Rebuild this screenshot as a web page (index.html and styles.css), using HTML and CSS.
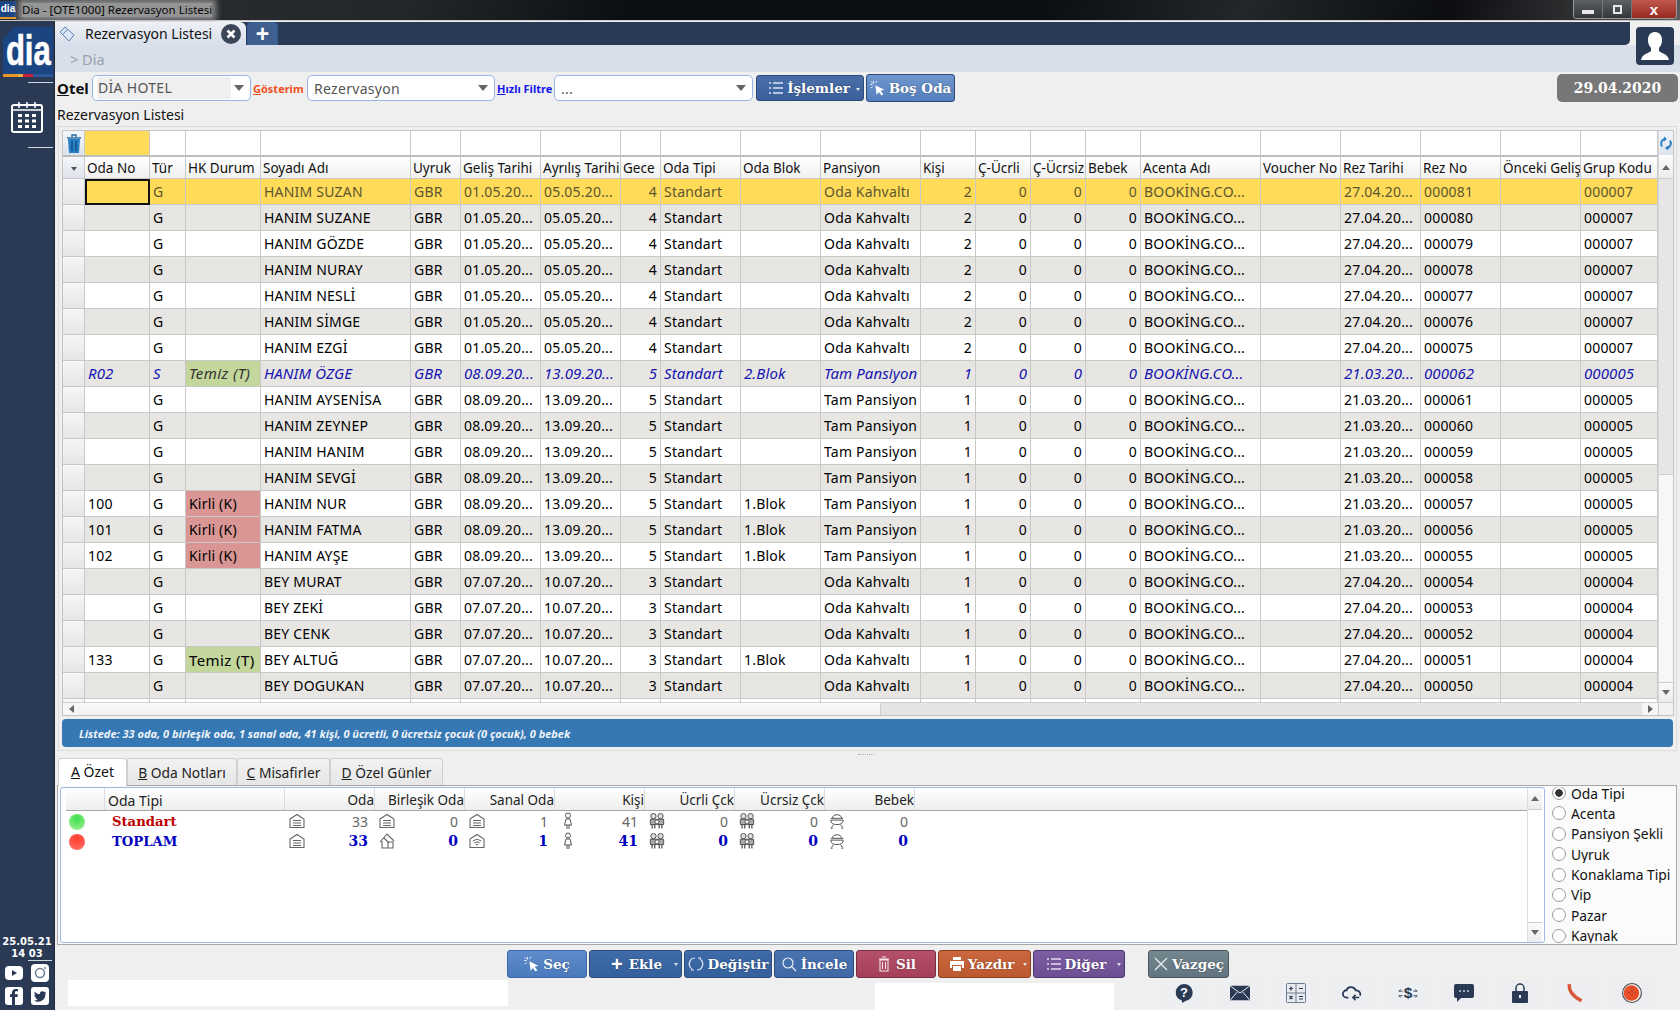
FILE: index.html
```html
<!DOCTYPE html>
<html lang="tr">
<head>
<meta charset="utf-8">
<title>Dia - Rezervasyon Listesi</title>
<link rel="stylesheet" href="styles.css">
</head>
<body>
<svg class="defs" aria-hidden="true">
  <symbol id="i-house" viewBox="0 0 16 16"><path d="M1 6 8 1.500 15 6v8.500H1Z M4 7.500h8 M4 10h8 M4 12.500h8" fill="none" stroke="#666" stroke-width="1.100"/></symbol>
  <symbol id="i-house2" viewBox="0 0 16 16"><path d="M1 9 8 1l7 7M3 8v7h6V9h5v6H9M5 5l5 5" fill="none" stroke="#666" stroke-width="1.100"/></symbol>
  <symbol id="i-wifi" viewBox="0 0 16 16"><path d="M1 6 8 1.500 15 6v8.500H1Z M4 8q4-3 8 0 M5.500 10q2.500-2 5 0 M7 12q1-1 2 0" fill="none" stroke="#666" stroke-width="1.100"/></symbol>
  <symbol id="i-person" viewBox="0 0 12 18"><circle cx="6" cy="3.500" r="2.500" fill="none" stroke="#555"/><path d="M4 7h4l1.500 6h-7ZM5 13v4M7 13v4" fill="none" stroke="#555"/></symbol>
  <symbol id="i-family" viewBox="0 0 18 18"><circle cx="5" cy="3.500" r="3" fill="#ddd" stroke="#444"/><circle cx="13" cy="3.500" r="3" fill="#ddd" stroke="#444"/><path d="M1.500 7h7v6h-7ZM9.500 7h7v6h-7Z" fill="#aaa" stroke="#444"/><path d="M3.500 13v4.500M6.500 13v4.500M11.500 13v4.500M14.500 13v4.500" fill="none" stroke="#444" stroke-width="1.300"/><circle cx="9" cy="10" r="2.300" fill="#fff" stroke="#444"/></symbol>
  <symbol id="i-stroller" viewBox="0 0 16 18"><path d="M1 8h14q0 5-7 5T1 8ZM3 6q0-4 5-4t5 4M1 6h14M4 13l-2 3M12 13l2 3" fill="none" stroke="#555" stroke-width="1.100"/><path d="M1 17h2M13 17h2" stroke="#555" stroke-width="1.400"/></symbol>
  <symbol id="i-click" viewBox="0 0 18 18"><path d="M6 6 16 11l-4 1 3 4-2 1.500-3-4-2.500 3Z" fill="#fff"/><path d="M4 1v3M0 5h3M1 1.500l2 2M8 1 6.500 3M1 9l2-1.500" stroke="#fff" fill="none"/></symbol>
</svg>

<div class="titlebar">
  <span class="title-logo">dia</span>
  <span class="title-text">Dia - [OTE1000] Rezervasyon Listesi</span>
  <div class="winbtns">
    <span class="winbtn"><i class="w-min"></i></span>
    <span class="winbtn"><i class="w-max"></i></span>
    <span class="winbtn close">x</span>
  </div>
</div>

<div class="workspace">
  <aside class="sidebar">
    <div class="logo"><span class="logo-text">dia</span></div>
    <div class="side-sep"></div>
    <svg class="calendar" viewBox="0 0 32 32"><rect x="1" y="4" width="30" height="27" rx="2" fill="none" stroke="#fff" stroke-width="2"/><path d="M8 1v6M16 1v6M24 1v6M1 9h30" stroke="#fff" stroke-width="1.600"/><path d="M7 13h4v3H7zM14 13h4v3h-4zM21 13h4v3h-4zM7 18.500h4v3H7zM14 18.500h4v3h-4zM21 18.500h4v3h-4zM7 24h4v3H7zM14 24h4v3h-4zM21 24h4v3h-4z" fill="#fff"/></svg>
    <div class="side-sep second"></div>
    <div class="side-clock">25.05.21<br>14 03</div>
    <div class="side-sep third"></div>
    <div class="social">
      <svg viewBox="0 0 18 18"><rect y="2" width="18" height="14" rx="4" fill="#fff"/><path d="M7 6v6l5-3Z" fill="#2a3a54"/></svg>
      <svg viewBox="0 0 18 18"><rect width="18" height="18" rx="4" fill="#fff"/><circle cx="9" cy="9" r="4.500" fill="none" stroke="#6f8296" stroke-width="1.600"/><circle cx="14" cy="4" r="1" fill="#6f8296"/></svg>
      <svg viewBox="0 0 18 18"><rect width="18" height="18" rx="3" fill="#fff"/><path d="M10 18V10h2.500l.4-2.800H10V5.600c0-.8.3-1.300 1.400-1.300H13V2h-2.300C8.500 2 7 3.300 7 5.400v1.800H5V10h2v8Z" fill="#2a3a54"/></svg>
      <svg viewBox="0 0 18 18"><rect width="18" height="18" rx="3" fill="#fff"/><path d="M15 5.200l-1.400.5 1-1.300-1.500.6a2.600 2.600 0 0 0-4.400 2.300C6.700 7.200 5 6.300 3.800 4.800c-.7 1.200-.3 2.700.8 3.400l-1.200-.3c0 1.300.9 2.300 2.100 2.600l-1.100.1c.3 1 1.300 1.800 2.400 1.800A5.200 5.200 0 0 1 3 13.500a7.400 7.400 0 0 0 11.400-6.600Z" fill="#2a3a54"/></svg>
    </div>
  </aside>

  <main class="main">
    <div class="tabbar">
      <div class="doc-tab">
        <svg class="doc-icon" viewBox="0 0 18 18"><path d="M2 7 7 2l9 8-5 6Z" fill="#dbe6f5" stroke="#5b7fb5"/><path d="M5 9l5-5" stroke="#5b7fb5"/></svg>
        <span class="doc-title">Rezervasyon Listesi</span>
        <svg class="doc-close" viewBox="0 0 20 20"><circle cx="10" cy="10" r="10" fill="#3a4658"/><path d="M6.500 6.500l7 7M13.500 6.500l-7 7" stroke="#fff" stroke-width="2.600"/></svg>
      </div>
      <div class="new-tab">+</div>
    </div>
    <svg class="avatar" viewBox="0 0 38 38"><rect width="38" height="38" rx="4" fill="#2a3a54"/><path d="M19 5c-5 0-7 4-7 8 0 3 1 6 3 8v3c-2 2-9 3-10 9h28c-1-6-8-7-10-9v-3c2-2 3-5 3-8 0-4-2-8-7-8Z" fill="#fff"/></svg>
    <div class="crumbs">&gt; Dia</div>

    <div class="toolbar">
      <span class="lbl-otel"><u>O</u>tel</span>
      <div class="combo c-otel"><span class="combo-field">DİA HOTEL</span><i class="caret"></i></div>
      <span class="lbl-gos"><u>G</u>österim</span>
      <div class="combo c-gos"><span>Rezervasyon</span><i class="caret"></i></div>
      <span class="lbl-hizli"><u>H</u>ızlı Filtre</span>
      <div class="combo c-hizli"><span>...</span><i class="caret"></i></div>
      <button class="btn b-islem"><svg class="btn-ic" viewBox="0 0 16 16"><path d="M1 3h2M5 3h10M1 8h2M5 8h10M1 13h2M5 13h10" stroke="#dce6f5" stroke-width="1.400"/></svg>İşlemler<i class="mini"></i></button>
      <button class="btn b-bos"><svg class="btn-ic"><use href="#i-click"/></svg>Boş Oda</button>
      <div class="datebox">29.04.2020</div>
    </div>
    <div class="list-title">Rezervasyon Listesi</div>

    <section class="panel">
      <div class="grid">
        <div class="grid-body">
          <div class="grid-clip">
            <table class="dt">
              <colgroup>
                <col class="w22"><col class="w65"><col class="w36"><col class="w75"><col class="w150"><col class="w50"><col class="w80"><col class="w80"><col class="w40"><col class="w80"><col class="w80"><col class="w100"><col class="w55"><col class="w55"><col class="w55"><col class="w55"><col class="w120"><col class="w80"><col class="w80"><col class="w80"><col class="w80"><col class="w77">
              </colgroup>
              <thead>
                <tr class="filter">
                  <td class="trash"><svg viewBox="0 0 16 20"><path d="M2 5h12l-1 14H3Z" fill="#2a80c4"/><path d="M1 4h14M6 3V1h4v2" stroke="#2a6fa8" stroke-width="1.500" fill="none"/><path d="M6 7v10M10 7v10" stroke="#0f4f85" stroke-width="1.500"/></svg></td>
                  <td class="fy"></td><td></td><td></td><td></td><td></td><td></td><td></td><td></td><td></td><td></td><td></td><td></td><td></td><td></td><td></td><td></td><td></td><td></td><td></td><td></td><td></td>
                </tr>
                <tr class="head">
                  <th class="corner"><i></i></th><th>Oda No</th><th>Tür</th><th>HK Durum</th><th>Soyadı Adı</th><th>Uyruk</th><th>Geliş Tarihi</th><th>Ayrılış Tarihi</th><th>Gece</th><th>Oda Tipi</th><th>Oda Blok</th><th>Pansiyon</th><th>Kişi</th><th>Ç-Ücrli</th><th>Ç-Ücrsiz</th><th>Bebek</th><th>Acenta Adı</th><th>Voucher No</th><th>Rez Tarihi</th><th>Rez No</th><th>Önceki Geliş</th><th>Grup Kodu</th>
                </tr>
              </thead>
              <tbody>
                <tr class="sel"><td></td><td class="cur"></td><td>G</td><td></td><td>HANIM SUZAN</td><td>GBR</td><td>01.05.20...</td><td>05.05.20...</td><td>4</td><td>Standart</td><td></td><td>Oda Kahvaltı</td><td>2</td><td>0</td><td>0</td><td>0</td><td>BOOKİNG.CO...</td><td></td><td>27.04.20...</td><td>000081</td><td></td><td>000007</td></tr>
                <tr><td></td><td></td><td>G</td><td></td><td>HANIM SUZANE</td><td>GBR</td><td>01.05.20...</td><td>05.05.20...</td><td>4</td><td>Standart</td><td></td><td>Oda Kahvaltı</td><td>2</td><td>0</td><td>0</td><td>0</td><td>BOOKİNG.CO...</td><td></td><td>27.04.20...</td><td>000080</td><td></td><td>000007</td></tr>
                <tr><td></td><td></td><td>G</td><td></td><td>HANIM GÖZDE</td><td>GBR</td><td>01.05.20...</td><td>05.05.20...</td><td>4</td><td>Standart</td><td></td><td>Oda Kahvaltı</td><td>2</td><td>0</td><td>0</td><td>0</td><td>BOOKİNG.CO...</td><td></td><td>27.04.20...</td><td>000079</td><td></td><td>000007</td></tr>
                <tr><td></td><td></td><td>G</td><td></td><td>HANIM NURAY</td><td>GBR</td><td>01.05.20...</td><td>05.05.20...</td><td>4</td><td>Standart</td><td></td><td>Oda Kahvaltı</td><td>2</td><td>0</td><td>0</td><td>0</td><td>BOOKİNG.CO...</td><td></td><td>27.04.20...</td><td>000078</td><td></td><td>000007</td></tr>
                <tr><td></td><td></td><td>G</td><td></td><td>HANIM NESLİ</td><td>GBR</td><td>01.05.20...</td><td>05.05.20...</td><td>4</td><td>Standart</td><td></td><td>Oda Kahvaltı</td><td>2</td><td>0</td><td>0</td><td>0</td><td>BOOKİNG.CO...</td><td></td><td>27.04.20...</td><td>000077</td><td></td><td>000007</td></tr>
                <tr><td></td><td></td><td>G</td><td></td><td>HANIM SİMGE</td><td>GBR</td><td>01.05.20...</td><td>05.05.20...</td><td>4</td><td>Standart</td><td></td><td>Oda Kahvaltı</td><td>2</td><td>0</td><td>0</td><td>0</td><td>BOOKİNG.CO...</td><td></td><td>27.04.20...</td><td>000076</td><td></td><td>000007</td></tr>
                <tr><td></td><td></td><td>G</td><td></td><td>HANIM EZGİ</td><td>GBR</td><td>01.05.20...</td><td>05.05.20...</td><td>4</td><td>Standart</td><td></td><td>Oda Kahvaltı</td><td>2</td><td>0</td><td>0</td><td>0</td><td>BOOKİNG.CO...</td><td></td><td>27.04.20...</td><td>000075</td><td></td><td>000007</td></tr>
                <tr class="virt"><td></td><td>R02</td><td>S</td><td class="temiz">Temiz (T)</td><td>HANIM ÖZGE</td><td>GBR</td><td>08.09.20...</td><td>13.09.20...</td><td>5</td><td>Standart</td><td>2.Blok</td><td>Tam Pansiyon</td><td>1</td><td>0</td><td>0</td><td>0</td><td>BOOKİNG.CO...</td><td></td><td>21.03.20...</td><td>000062</td><td></td><td>000005</td></tr>
                <tr><td></td><td></td><td>G</td><td></td><td>HANIM AYSENİSA</td><td>GBR</td><td>08.09.20...</td><td>13.09.20...</td><td>5</td><td>Standart</td><td></td><td>Tam Pansiyon</td><td>1</td><td>0</td><td>0</td><td>0</td><td>BOOKİNG.CO...</td><td></td><td>21.03.20...</td><td>000061</td><td></td><td>000005</td></tr>
                <tr><td></td><td></td><td>G</td><td></td><td>HANIM ZEYNEP</td><td>GBR</td><td>08.09.20...</td><td>13.09.20...</td><td>5</td><td>Standart</td><td></td><td>Tam Pansiyon</td><td>1</td><td>0</td><td>0</td><td>0</td><td>BOOKİNG.CO...</td><td></td><td>21.03.20...</td><td>000060</td><td></td><td>000005</td></tr>
                <tr><td></td><td></td><td>G</td><td></td><td>HANIM HANIM</td><td>GBR</td><td>08.09.20...</td><td>13.09.20...</td><td>5</td><td>Standart</td><td></td><td>Tam Pansiyon</td><td>1</td><td>0</td><td>0</td><td>0</td><td>BOOKİNG.CO...</td><td></td><td>21.03.20...</td><td>000059</td><td></td><td>000005</td></tr>
                <tr><td></td><td></td><td>G</td><td></td><td>HANIM SEVGİ</td><td>GBR</td><td>08.09.20...</td><td>13.09.20...</td><td>5</td><td>Standart</td><td></td><td>Tam Pansiyon</td><td>1</td><td>0</td><td>0</td><td>0</td><td>BOOKİNG.CO...</td><td></td><td>21.03.20...</td><td>000058</td><td></td><td>000005</td></tr>
                <tr><td></td><td>100</td><td>G</td><td class="kirli">Kirli (K)</td><td>HANIM NUR</td><td>GBR</td><td>08.09.20...</td><td>13.09.20...</td><td>5</td><td>Standart</td><td>1.Blok</td><td>Tam Pansiyon</td><td>1</td><td>0</td><td>0</td><td>0</td><td>BOOKİNG.CO...</td><td></td><td>21.03.20...</td><td>000057</td><td></td><td>000005</td></tr>
                <tr><td></td><td>101</td><td>G</td><td class="kirli">Kirli (K)</td><td>HANIM FATMA</td><td>GBR</td><td>08.09.20...</td><td>13.09.20...</td><td>5</td><td>Standart</td><td>1.Blok</td><td>Tam Pansiyon</td><td>1</td><td>0</td><td>0</td><td>0</td><td>BOOKİNG.CO...</td><td></td><td>21.03.20...</td><td>000056</td><td></td><td>000005</td></tr>
                <tr><td></td><td>102</td><td>G</td><td class="kirli">Kirli (K)</td><td>HANIM AYŞE</td><td>GBR</td><td>08.09.20...</td><td>13.09.20...</td><td>5</td><td>Standart</td><td>1.Blok</td><td>Tam Pansiyon</td><td>1</td><td>0</td><td>0</td><td>0</td><td>BOOKİNG.CO...</td><td></td><td>21.03.20...</td><td>000055</td><td></td><td>000005</td></tr>
                <tr><td></td><td></td><td>G</td><td></td><td>BEY MURAT</td><td>GBR</td><td>07.07.20...</td><td>10.07.20...</td><td>3</td><td>Standart</td><td></td><td>Oda Kahvaltı</td><td>1</td><td>0</td><td>0</td><td>0</td><td>BOOKİNG.CO...</td><td></td><td>27.04.20...</td><td>000054</td><td></td><td>000004</td></tr>
                <tr><td></td><td></td><td>G</td><td></td><td>BEY ZEKİ</td><td>GBR</td><td>07.07.20...</td><td>10.07.20...</td><td>3</td><td>Standart</td><td></td><td>Oda Kahvaltı</td><td>1</td><td>0</td><td>0</td><td>0</td><td>BOOKİNG.CO...</td><td></td><td>27.04.20...</td><td>000053</td><td></td><td>000004</td></tr>
                <tr><td></td><td></td><td>G</td><td></td><td>BEY CENK</td><td>GBR</td><td>07.07.20...</td><td>10.07.20...</td><td>3</td><td>Standart</td><td></td><td>Oda Kahvaltı</td><td>1</td><td>0</td><td>0</td><td>0</td><td>BOOKİNG.CO...</td><td></td><td>27.04.20...</td><td>000052</td><td></td><td>000004</td></tr>
                <tr><td></td><td>133</td><td>G</td><td class="temiz">Temiz (T)</td><td>BEY ALTUĞ</td><td>GBR</td><td>07.07.20...</td><td>10.07.20...</td><td>3</td><td>Standart</td><td>1.Blok</td><td>Oda Kahvaltı</td><td>1</td><td>0</td><td>0</td><td>0</td><td>BOOKİNG.CO...</td><td></td><td>27.04.20...</td><td>000051</td><td></td><td>000004</td></tr>
                <tr><td></td><td></td><td>G</td><td></td><td>BEY DOGUKAN</td><td>GBR</td><td>07.07.20...</td><td>10.07.20...</td><td>3</td><td>Standart</td><td></td><td>Oda Kahvaltı</td><td>1</td><td>0</td><td>0</td><td>0</td><td>BOOKİNG.CO...</td><td></td><td>27.04.20...</td><td>000050</td><td></td><td>000004</td></tr>
                <tr class="blank"><td></td><td></td><td></td><td></td><td></td><td></td><td></td><td></td><td></td><td></td><td></td><td></td><td></td><td></td><td></td><td></td><td></td><td></td><td></td><td></td><td></td><td></td></tr>
              </tbody>
            </table>
          </div>
          <div class="vscroll">
            <div class="vs-refresh"><svg viewBox="0 0 14 14"><path d="M3 10A5 5 0 0 1 5.500 2.500M11 4a5 5 0 0 1-2.500 7.500" fill="none" stroke="#2a7fc0" stroke-width="2"/><path d="M5 0v5l3-2.500ZM9 14V9l-3 2.500Z" fill="#2a7fc0"/></svg></div>
            <div class="vs-btn h22"><i class="tri up"></i></div>
            <div class="vs-thumb"></div>
            <div class="vs-track"></div>
            <div class="vs-btn h20"><i class="tri down"></i></div>
          </div>
        </div>
        <div class="hscroll">
          <div class="hs-btn"><i class="tri left"></i></div>
          <div class="hs-thumb"></div>
          <div class="hs-track"></div>
          <div class="hs-btn"><i class="tri right"></i></div>
          <div class="hs-corner"></div>
        </div>
      </div>
      <div class="statusbar">Listede: 33 oda, 0 birleşik oda, 1 sanal oda, 41 kişi, 0 ücretli, 0 ücretsiz çocuk (0 çocuk), 0 bebek</div>
    </section>

    <div class="sash"><i></i></div>

    <nav class="tabs">
      <span class="tab active"><u>A</u> Özet</span>
      <span class="tab t-b"><u>B</u> Oda Notları</span>
      <span class="tab t-c"><u>C</u> Misafirler</span>
      <span class="tab t-d"><u>D</u> Özel Günler</span>
    </nav>

    <section class="sumframe">
      <div class="sumleft">
        <div class="sumgrid">
          <div class="sum-row sum-head">
            <span></span><span class="left">Oda Tipi</span><span>Oda</span><span>Birleşik Oda</span><span>Sanal Oda</span><span>Kişi</span><span>Ücrli Çck</span><span>Ücrsiz Çck</span><span>Bebek</span>
          </div>
          <div class="sum-row sum-data">
            <i class="led green"></i><b class="name red">Standart</b>
            <span class="v"><svg><use href="#i-house"/></svg>33</span>
            <span class="v"><svg><use href="#i-house"/></svg>0</span>
            <span class="v"><svg><use href="#i-house"/></svg>1</span>
            <span class="v"><svg class="narrow"><use href="#i-person"/></svg>41</span>
            <span class="v"><svg><use href="#i-family"/></svg>0</span>
            <span class="v"><svg><use href="#i-family"/></svg>0</span>
            <span class="v"><svg><use href="#i-stroller"/></svg>0</span>
          </div>
          <div class="sum-row sum-data total">
            <i class="led redled"></i><b class="name blue">TOPLAM</b>
            <span class="v"><svg><use href="#i-house"/></svg><b>33</b></span>
            <span class="v"><svg><use href="#i-house2"/></svg><b>0</b></span>
            <span class="v"><svg><use href="#i-wifi"/></svg><b>1</b></span>
            <span class="v"><svg class="narrow"><use href="#i-person"/></svg><b>41</b></span>
            <span class="v"><svg><use href="#i-family"/></svg><b>0</b></span>
            <span class="v"><svg><use href="#i-family"/></svg><b>0</b></span>
            <span class="v"><svg><use href="#i-stroller"/></svg><b>0</b></span>
          </div>
        </div>
        <div class="vs2">
          <div class="vs-btn h22"><i class="tri up"></i></div>
          <div class="vs2-track"></div>
          <div class="vs-btn h20"><i class="tri down"></i></div>
        </div>
      </div>
      <div class="radios">
        <label class="radio on"><i></i><span>Oda Tipi</span></label>
        <label class="radio"><i></i><span>Acenta</span></label>
        <label class="radio"><i></i><span>Pansiyon Şekli</span></label>
        <label class="radio"><i></i><span>Uyruk</span></label>
        <label class="radio"><i></i><span>Konaklama Tipi</span></label>
        <label class="radio"><i></i><span>Vip</span></label>
        <label class="radio"><i></i><span>Pazar</span></label>
        <label class="radio"><i></i><span>Kaynak</span></label>
      </div>
    </section>

    <div class="actions">
      <button class="btn a-sec"><svg class="btn-ic"><use href="#i-click"/></svg>Seç</button>
      <button class="btn a-ekle"><span class="plus">+</span>Ekle<i class="mini"></i></button>
      <button class="btn a-deg"><svg class="btn-ic" viewBox="0 0 16 16"><path d="M4 13A6 6 0 0 1 7 2M12 3a6 6 0 0 1-3 11M3 14h3M13 2h-3" fill="none" stroke="#e6eef8" stroke-width="1.200"/></svg>Değiştir</button>
      <button class="btn a-inc"><svg class="btn-ic" viewBox="0 0 16 16"><circle cx="7" cy="7" r="5" fill="none" stroke="#e6eef8" stroke-width="1.200"/><path d="M10.500 10.500 15 15" stroke="#e6eef8" stroke-width="1.200"/></svg>İncele</button>
      <button class="btn a-sil"><svg class="btn-ic" viewBox="0 0 16 16"><path d="M4 4h8v11H4ZM3 3h10M6 1h4M6.500 6v7M9.500 6v7" fill="none" stroke="#f5e6ea" stroke-width="1.100"/></svg>Sil</button>
      <button class="btn a-yaz"><svg class="btn-ic" viewBox="0 0 16 16"><path d="M4 1h8v3H4ZM1 5h14v7h-2V9H3v3H1ZM4 10h8v5H4Z" fill="#fff"/></svg>Yazdır<i class="mini"></i></button>
      <button class="btn a-dig"><svg class="btn-ic" viewBox="0 0 16 16"><path d="M1 3h2M5 3h10M1 8h2M5 8h10M1 13h2M5 13h10" stroke="#e4dcf0" stroke-width="1.400"/></svg>Diğer<i class="mini"></i></button>
      <button class="btn a-vaz"><svg class="btn-ic" viewBox="0 0 16 16"><path d="M2 2l12 12M14 2 2 14" stroke="#e8eef0" stroke-width="1.300"/></svg>Vazgeç</button>
    </div>

    <footer class="footer">
      <div class="blank-a"></div>
      <div class="blank-b"></div>
      <div class="tools">
        <span class="tool"><svg viewBox="0 0 20 20"><path d="M10 1a8.500 8.500 0 0 1 2 16.800L8 20v-2.300A8.500 8.500 0 0 1 10 1Z" fill="#2a3a54"/><text x="10" y="14" class="q">?</text></svg></span>
        <span class="tool"><svg viewBox="0 0 22 18"><rect y="1" width="22" height="16" fill="#2a3a54"/><path d="M0 1l11 8 11-8M0 17l8-9M22 17l-8-9" fill="none" stroke="#fff"/></svg></span>
        <span class="tool"><svg viewBox="0 0 20 20"><rect x=".5" y=".5" width="19" height="19" rx="1" fill="#e8eaee" stroke="#6f7d90"/><path d="M10 .5v19M.5 10h19" stroke="#6f7d90"/><path d="M3 5.500h4M5 3.500v4M13 5.500h4M3.500 13l3 3M6.500 13l-3 3M13 13.500h4M13 16h4" stroke="#2a3a54" stroke-width="1.200"/></svg></span>
        <span class="tool"><svg viewBox="0 0 22 18"><path d="M7 14H5a4 4 0 0 1 0-8c1-4 8-5 10 0 3 0 6 2 5 6" fill="none" stroke="#2a3a54" stroke-width="2"/><path d="M19 14h-7M15 11l-3 3 3 3" fill="none" stroke="#2a3a54" stroke-width="1.800"/></svg></span>
        <span class="tool"><svg viewBox="0 0 22 20"><text x="11" y="16" class="dollar">$</text><path d="M1 8h4M3 6 1 8M1 13h4M3 15l-2-2M17 8h4M19 6l2 2M17 13h4M19 15l2-2" stroke="#2a3a54" fill="none"/></svg></span>
        <span class="tool"><svg viewBox="0 0 20 18"><path d="M2 0h16a2 2 0 0 1 2 2v10a2 2 0 0 1-2 2H7l-4 4v-4H2a2 2 0 0 1-2-2V2a2 2 0 0 1 2-2Z" fill="#2a3a54"/><path d="M5 7h2M9 7h2M13 7h2" stroke="#c8d0dc" stroke-width="1.600"/></svg></span>
        <span class="tool"><svg viewBox="0 0 16 20"><path d="M4 9V5a4 4 0 0 1 8 0v4" fill="none" stroke="#2a3a54" stroke-width="1.500"/><rect y="8" width="16" height="12" rx="1" fill="#2a3a54"/><rect x="7" y="12" width="2" height="3" fill="#fff"/></svg></span>
        <span class="tool"><svg viewBox="0 0 16 18"><path d="M2 1q-1 9 11 15" fill="none" stroke="#d9583a" stroke-width="3"/></svg></span>
        <span class="tool"><svg viewBox="0 0 18 18"><circle cx="9" cy="9" r="8.500" fill="#f4f4f4" stroke="#4a4a4a"/><circle cx="8.500" cy="9" r="7" fill="#e8502a"/><path d="M9 4v1M9 7v1M9 10v1M6 8v1M12 8v1" stroke="#8a2a1a"/></svg></span>
      </div>
    </footer>
  </main>
</div>
</body>
</html>
```

FILE: styles.css
```css
* { box-sizing: border-box; }
html, body { margin: 0; height: 100%; }
body {
  width: 1680px;
  height: 1010px;
  overflow: hidden;
  background: #efefef;
  font-family: "Noto Sans", "Liberation Sans", sans-serif;
  font-size: 14px;
  color: #000;
}
.defs { position: absolute; width: 0; height: 0; }
button { font: inherit; padding: 0; }

/* title bar */
.titlebar {
  height: 21px;
  display: flex;
  align-items: center;
  border-bottom: 1px solid #c8c8c8;
  background: linear-gradient(100deg, #2c2f32 0, #24272a 24%, #0c1014 37%, #0b0f13 62%, #23262a 74%, #0b0d10 86%, #2a2c2e 93%, #5a5a5a 100%);
}
.title-logo {
  width: 16px;
  height: 18px;
  flex: none;
  background: #1b4580;
  border-bottom: 2px solid #e8952c;
  color: #fff;
  font: bold 10px/16px "Liberation Sans", sans-serif;
  text-align: center;
}
.title-text {
  margin-left: 6px;
  height: 14px;
  line-height: 14px;
  font-size: 11.500px;
  color: #050505;
  background: rgba(175, 175, 175, .8);
  box-shadow: 0 0 6px 4px rgba(175, 175, 175, .7);
}
.winbtns {
  margin-left: auto;
  margin-right: 3px;
  display: flex;
  align-self: flex-start;
  height: 19px;
  border: 1px solid #9a9a9a;
  border-top: 0;
  border-radius: 0 0 4px 4px;
  overflow: hidden;
}
.winbtn {
  width: 29px;
  height: 18px;
  display: flex;
  align-items: center;
  justify-content: center;
  background: linear-gradient(#5d6064, #33363a);
  border-right: 1px solid #777;
}
.winbtn.close {
  width: 44px;
  border-right: 0;
  background: linear-gradient(#c0564c, #962a22);
  color: #fff;
  font: bold 15px/1 "Liberation Sans", sans-serif;
}
.w-min { width: 12px; height: 4px; margin-top: 5px; background: #e8e8e8; }
.w-max { width: 9px; height: 9px; border: 2px solid #e8e8e8; }

/* layout */
.workspace { display: flex; height: 989px; }
.sidebar {
  width: 55px;
  flex: none;
  background: #2a3a54;
  display: flex;
  flex-direction: column;
  align-items: flex-end;
  padding-top: 6px;
  border-right: 1px solid #20293a;
}
.main { flex: 1; min-width: 0; position: relative; display: flex; flex-direction: column; }

/* sidebar */
.logo {
  width: 50px;
  height: 50px;
  margin-right: 1px;
  background:
    linear-gradient(90deg, #e8952c 0 30%, #e8b03c 30% 40%, #c8203c 40% 60%, #2a5a9c 60% 100%) bottom / 100% 3px no-repeat,
    #1b4580;
  clip-path: polygon(22% 0, 100% 0, 100% 100%, 0 100%, 0 24%);
  display: flex;
  justify-content: center;
  align-items: center;
  overflow: hidden;
}
.logo-text {
  font: bold 42px/1 "Liberation Sans", sans-serif;
  color: #fff;
  -webkit-text-stroke: .6px #fff;
  transform: scaleX(.74);
  margin-top: -2px;
}
.side-sep { width: 25px; height: 1px; background: #d0d6de; margin: 5px 1px 0 0; }
.side-sep.second { margin-top: 14px; }
.side-sep.third { margin-top: 0; width: 24px; margin-right: 2px; }
.calendar { width: 32px; height: 32px; margin: 18px 11px 0 0; flex: none; }
.side-clock {
  margin-top: auto;
  width: 54px;
  text-align: center;
  color: #fff;
  font: bold 10px/12px "DejaVu Sans", sans-serif;
}
.social {
  width: 54px;
  display: grid;
  grid-template-columns: 18px 18px;
  column-gap: 8px;
  row-gap: 5px;
  justify-content: center;
  padding: 3px 0 5px;
}
.social svg { width: 18px; height: 18px; display: block; }

/* tabs top */
.tabbar {
  height: 23px;
  margin-top: 1px;
  margin-right: 50px;
  background: #2a3a54;
  border-radius: 0 0 5px 0;
  display: flex;
  align-items: stretch;
}
.doc-tab {
  width: 191px;
  background: linear-gradient(#eef1f6, #d8dfea);
  border-radius: 0 6px 0 0;
  display: flex;
  align-items: center;
  position: relative;
}
.doc-icon { width: 18px; height: 18px; margin-left: 3px; flex: none; }
.doc-title { margin-left: 9px; font-size: 14px; color: #111; white-space: nowrap; }
.doc-close { width: 20px; height: 20px; margin-left: 9px; flex: none; }
.new-tab {
  width: 31px;
  margin-left: 1px;
  background: #3f5f8e;
  border-radius: 4px 4px 0 0;
  border: 1px solid #2f5a94;
  border-bottom: 0;
  color: #fff;
  font: bold 23px/22px "Liberation Sans", sans-serif;
  text-align: center;
}
.avatar { position: absolute; top: 6px; right: 6px; width: 38px; height: 38px; }
.crumbs {
  height: 27px;
  background: #d8dfea;
  color: #9a9fa8;
  padding: 3px 0 0 15px;
  font-size: 14.500px;
  line-height: 22px;
}

/* toolbar */
.toolbar { height: 32px; display: flex; align-items: center; position: relative; }
.lbl-otel { margin-left: 2px; width: 35px; font-size: 15px; font-weight: 700; color: #111; }
.lbl-gos { width: 56px; padding-left: 2px; font-size: 11px; font-weight: 700; color: #f0501f; white-space: nowrap; }
.lbl-hizli { width: 59px; padding-left: 2px; font-size: 11px; font-weight: 700; color: #1616ee; white-space: nowrap; }
.combo {
  height: 26px;
  background: #fff;
  border: 1px solid #93b6e6;
  border-radius: 5px;
  display: flex;
  align-items: center;
  padding-left: 6px;
  color: #555;
  position: relative;
  letter-spacing: .3px;
}
.c-otel { width: 159px; }
.combo-field { width: 134px; margin-left: -2px; padding-left: 1px; background: #efefef; height: 22px; line-height: 21px; }
.c-gos { width: 188px; }
.c-hizli { width: 199px; }
.caret {
  position: absolute;
  right: 6px;
  top: 9px;
  border: 5px solid transparent;
  border-top: 6px solid #666;
  border-bottom: 0;
}
.btn {
  height: 28px;
  border: 1px solid #2c4a78;
  border-radius: 3px;
  color: #fff;
  font: bold 13.500px/24px "DejaVu Serif", serif;
  text-shadow: 0 0 2px rgba(0, 0, 0, .35);
  display: flex;
  align-items: center;
  justify-content: center;
  position: relative;
  white-space: nowrap;
}
.btn-ic { width: 16px; height: 16px; margin-right: 3px; flex: none; }
.mini {
  position: absolute;
  right: 3px;
  top: 12px;
  border: 2px solid transparent;
  border-top: 3px solid #dfe6f0;
  border-bottom: 0;
}
.b-islem { width: 108px; height: 26px; margin-left: 3px; background: linear-gradient(#4a6fa8, #3a5f9c); padding-right: 2px; }
.b-bos { width: 89px; margin-left: 2px; background: linear-gradient(#6e95cd, #5580bd); }
.datebox {
  margin-left: auto;
  margin-right: 2px;
  width: 121px;
  height: 28px;
  background: #777;
  border-radius: 5px;
  color: #fff;
  font: bold 14px/28px "DejaVu Serif", serif;
  text-align: center;
}
.list-title { height: 22px; padding: 1px 0 0 2px; line-height: 20px; font-size: 14px; color: #111; }

/* grid panel */
.panel {
  margin: 0 3px 0 3px;
  height: 625px;
  border: 1px solid #dcdcdc;
  padding: 3px 2px 3px 3px;
  flex: none;
}
.grid { height: 586px; border: 1px solid #c4c4c4; background: #fff; }
.grid-body { height: 571px; display: flex; }
.grid-clip { width: 1595px; height: 571px; overflow: hidden; flex: none; }
.dt { width: 1595px; table-layout: fixed; border-collapse: separate; border-spacing: 0; }
.w22 { width: 22px; } .w36 { width: 36px; } .w40 { width: 40px; } .w50 { width: 50px; }
.w55 { width: 55px; } .w65 { width: 65px; } .w75 { width: 75px; } .w77 { width: 77px; }
.w80 { width: 80px; } .w100 { width: 100px; } .w120 { width: 120px; } .w150 { width: 150px; }
.dt td, .dt th {
  padding: 0 0 0 3px;
  height: 26px;
  border-right: 1px solid #c8c8c8;
  border-bottom: 1px solid #c8c8c8;
  white-space: nowrap;
  overflow: hidden;
  font-weight: 400;
  text-align: left;
  font-size: 14px;
  line-height: 20px;
  letter-spacing: .2px;
}
.dt th { font-size: 13.500px; letter-spacing: 0; padding-left: 2px; padding-top: 1px; line-height: 20px; }
.filter td { height: 26px; border-bottom: 2px solid #bdbdbd; background: #fff; padding: 0; }
.filter .trash { background: linear-gradient(#f2f5fa, #dde3ec); text-align: center; }
.trash svg { width: 16px; height: 20px; display: block; margin: 2px auto 0; }
.filter .fy { background: #ffdb58; }
.head th { height: 22px; background: linear-gradient(#fff, #f0f0f0); color: #111; }
.head .corner { background: linear-gradient(#f4f6fa, #dfe4ec); text-align: center; padding: 0; }
.corner i { display: inline-block; border: 3px solid transparent; border-top: 4px solid #555; border-bottom: 0; vertical-align: middle; }
tbody tr:nth-child(even) td { background: #e8e6e3; }
tbody tr:nth-child(odd) td { background: #fff; }
tbody tr:nth-child(n) td:first-child { background: linear-gradient(#f6f6f6, #e6e6e6); }
tbody td:nth-child(9), tbody td:nth-child(13), tbody td:nth-child(14), tbody td:nth-child(15), tbody td:nth-child(16) { text-align: right; padding-right: 3px; padding-left: 0; }
tbody tr.sel td { background: #ffdb58; color: #5d5530; }
tbody tr.sel td:first-child { background: linear-gradient(#f6f6f6, #e6e6e6); }
tbody tr.sel td.cur { border: 2px solid #111; background: #ffdb58; }
.dt tr.virt td { color: #1414b0; font-style: italic; font-size: 15px; letter-spacing: .1px; padding-bottom: 2px; }
.dt tr.virt td.temiz { color: #333; letter-spacing: .4px; }
tbody tr td.temiz { background: #c3d69b; font-size: 15px; letter-spacing: .4px; }
tbody tr td.kirli { background: #d99694; }

/* scrollbars */
.vscroll { width: 15px; flex: none; display: flex; flex-direction: column; background: #f4f4f4; border-left: 1px solid #d8d8d8; }
.vs-refresh { height: 26px; background: linear-gradient(#f2f5fa, #dde3ec); border-bottom: 2px solid #fff; display: flex; align-items: center; justify-content: center; }
.vs-refresh svg { width: 14px; height: 15px; }
.vs-btn { background: linear-gradient(#fafafa, #ececec); border-bottom: 1px solid #ccc; display: flex; align-items: center; justify-content: center; flex: none; }
.h22 { height: 22px; }
.h20 { height: 20px; border-bottom: 0; border-top: 1px solid #ccc; }
.vs-thumb { height: 296px; background: #e6e6e6; border-bottom: 1px solid #ccc; }
.vs-track { flex: 1; background: #f7f7f7; }
.tri { border: 4px solid transparent; display: block; }
.tri.up { border-bottom: 5px solid #666; border-top: 0; }
.tri.down { border-top: 5px solid #666; border-bottom: 0; }
.tri.left { border-right: 5px solid #666; border-left: 0; }
.tri.right { border-left: 5px solid #666; border-right: 0; }
.hscroll { height: 13px; display: flex; border-top: 1px solid #d0d0d0; background: #e4e4e4; }
.hs-btn { width: 16px; background: #f6f6f6; display: flex; align-items: center; justify-content: center; flex: none; }
.hs-thumb { width: 802px; background: linear-gradient(#fafafa, #f0f0f0); flex: none; border-right: 1px solid #ccc; }
.hs-track { flex: 1; background: #e4e4e4; }
.hs-corner { width: 15px; flex: none; background: #f2f2f2; border-left: 1px solid #ccc; }
.statusbar {
  margin: 3px 1px 0 0;
  height: 28px;
  background: #3578b4;
  border-radius: 4px;
  color: #f0f4fa;
  font: italic bold 11px/29px "Noto Sans", sans-serif;
  padding-left: 17px;
  white-space: nowrap;
}
.sash { height: 6px; display: flex; align-items: center; justify-content: center; margin-left: -3px; }
.sash i { width: 16px; height: 1px; border-top: 1px dotted #aaa; }

/* lower tabs */
.tabs { height: 28px; display: flex; margin-left: 3px; align-items: flex-end; }
.tab {
  width: 110px;
  height: 27px;
  border: 1px solid #cfcfcf;
  border-bottom: 0;
  border-radius: 3px 3px 0 0;
  background: linear-gradient(#f2f2f2, #e6e6e6);
  text-align: center;
  line-height: 27px;
  font-size: 13.800px;
  white-space: nowrap;
  color: #222;
}
.tab.active { width: 69px; height: 28px; background: #fff; color: #111; margin-bottom: -1px; z-index: 1; line-height: 26px; font-size: 14px; }
.t-c { width: 93px; }
.t-d { width: 113px; }

/* summary */
.sumframe {
  margin-left: 2px;
  width: 1620px;
  height: 160px;
  border: 1px solid #a8a8a8;
  padding: 1px 0 1px 2px;
  display: flex;
  background: #f7f7f7;
  flex: none;
}
.sumleft {
  width: 1485px;
  flex: none;
  border: 1px solid #9dbce8;
  border-radius: 3px;
  background: #fff;
  display: flex;
  padding-left: 5px;
}
.sumgrid { flex: 1; min-width: 0; }
.sum-row { display: grid; grid-template-columns: 39px 180px repeat(7, 90px); align-items: center; }
.sum-head { height: 23px; background: linear-gradient(#fff, #eee); border-bottom: 1px solid #a8a8a8; }
.sum-head span { height: 22px; line-height: 25px; text-align: right; padding-right: 0; border-right: 1px solid #dcdcdc; white-space: nowrap; color: #222; font-size: 13.500px; }
.sum-head .left { text-align: left; padding-left: 3px; font-size: 14px; }
.sum-data { height: 20px; }
.sum-data:nth-child(2) { margin-top: 1px; }
.led { width: 16px; height: 16px; border-radius: 50%; margin-left: 3px; display: block; }
.green { background: radial-gradient(circle at 50% 30%, #3ee04a, #a8f0a0); }
.redled { background: radial-gradient(circle at 50% 30%, #ff3a2a, #ff7a70); }
.name { font: bold 13.200px/20px "DejaVu Serif", serif; padding-left: 7px; }
.red { color: #c00000; }
.blue { color: #0000c0; }
.v { display: flex; align-items: center; justify-content: space-between; padding: 0 7px 2px 4px; color: #666; font-size: 14px; height: 20px; }
.v svg { width: 16px; height: 16px; flex: none; }
.v svg.narrow { width: 12px; height: 18px; margin-left: 3px; }
.v b { color: #0000c0; font: bold 14px/20px "DejaVu Serif", serif; }
.vs2 { width: 15px; margin-right: 2px; display: flex; flex-direction: column; border-left: 1px solid #ddd; flex: none; }
.vs2-track { flex: 1; background: #fff; }
.radios {
  flex: 1;
  overflow: hidden;
  display: flex;
  flex-direction: column;
  gap: 6.400px;
  padding-left: 7px;
  background: #fbfbfb;
}
.radio { height: 14px; flex: none; display: flex; align-items: center; gap: 5px; position: relative; top: -1px; }
.radio i { width: 14px; height: 14px; border: 1px solid #9a9a9a; border-radius: 50%; background: #fff; flex: none; }
.radio.on i { background: radial-gradient(circle, #333 0 3.500px, #fff 4px); }
.radio span { height: 17px; line-height: 17px; overflow: hidden; white-space: nowrap; color: #111; font-size: 13.800px; }

/* actions */
.actions { display: flex; margin: 5px 0 0 452px; gap: 2px; }
.a-sec { width: 80px; background: linear-gradient(#5f8ccb, #4a7abd); border-color: #3a6aa8; }
.a-ekle { width: 93px; background: linear-gradient(#3f6ba9, #34609c); padding-left: 2px; }
.plus { font: bold 20px/20px "Liberation Sans", sans-serif; margin-right: 6px; }
.a-deg { width: 88px; background: linear-gradient(#3f6ba9, #34609c); }
.a-inc { width: 80px; background: linear-gradient(#4a74b0, #3f69a6); }
.a-sil { width: 80px; background: linear-gradient(#b5506a, #a5405a); border-color: #7c2c40; }
.a-yaz { width: 93px; background: linear-gradient(#cc6840, #ba5830); border-color: #8a3f20; padding-right: 6px; }
.a-dig { width: 92px; background: linear-gradient(#7c5ea2, #6c4f92); border-color: #4c3670; padding-right: 6px; }
.a-vaz { width: 81px; margin-left: 21px; background: linear-gradient(#74868e, #627480); border-color: #46565e; }
.a-deg .btn-ic, .a-inc .btn-ic, .a-sil .btn-ic { margin-right: 4px; }

/* footer */
.footer { display: flex; align-items: flex-start; margin-top: 2px; height: 30px; flex: none; }
.blank-a { margin-left: 13px; width: 440px; height: 26px; background: #fff; flex: none; }
.blank-b { margin: 3px 0 0 367px; width: 239px; height: 27px; background: #fff; flex: none; }
.tools { display: flex; gap: 21px; margin-left: 52px; }
.tool { width: 35px; height: 24px; margin-top: 1px; background: #eceef2; display: flex; align-items: center; justify-content: center; }
.tool svg { width: 20px; height: 20px; }
.q { font: bold 13px "Liberation Sans", sans-serif; fill: #fff; text-anchor: middle; }
.dollar { font: bold 17px "Liberation Sans", sans-serif; fill: #2a3a54; text-anchor: middle; }
```
